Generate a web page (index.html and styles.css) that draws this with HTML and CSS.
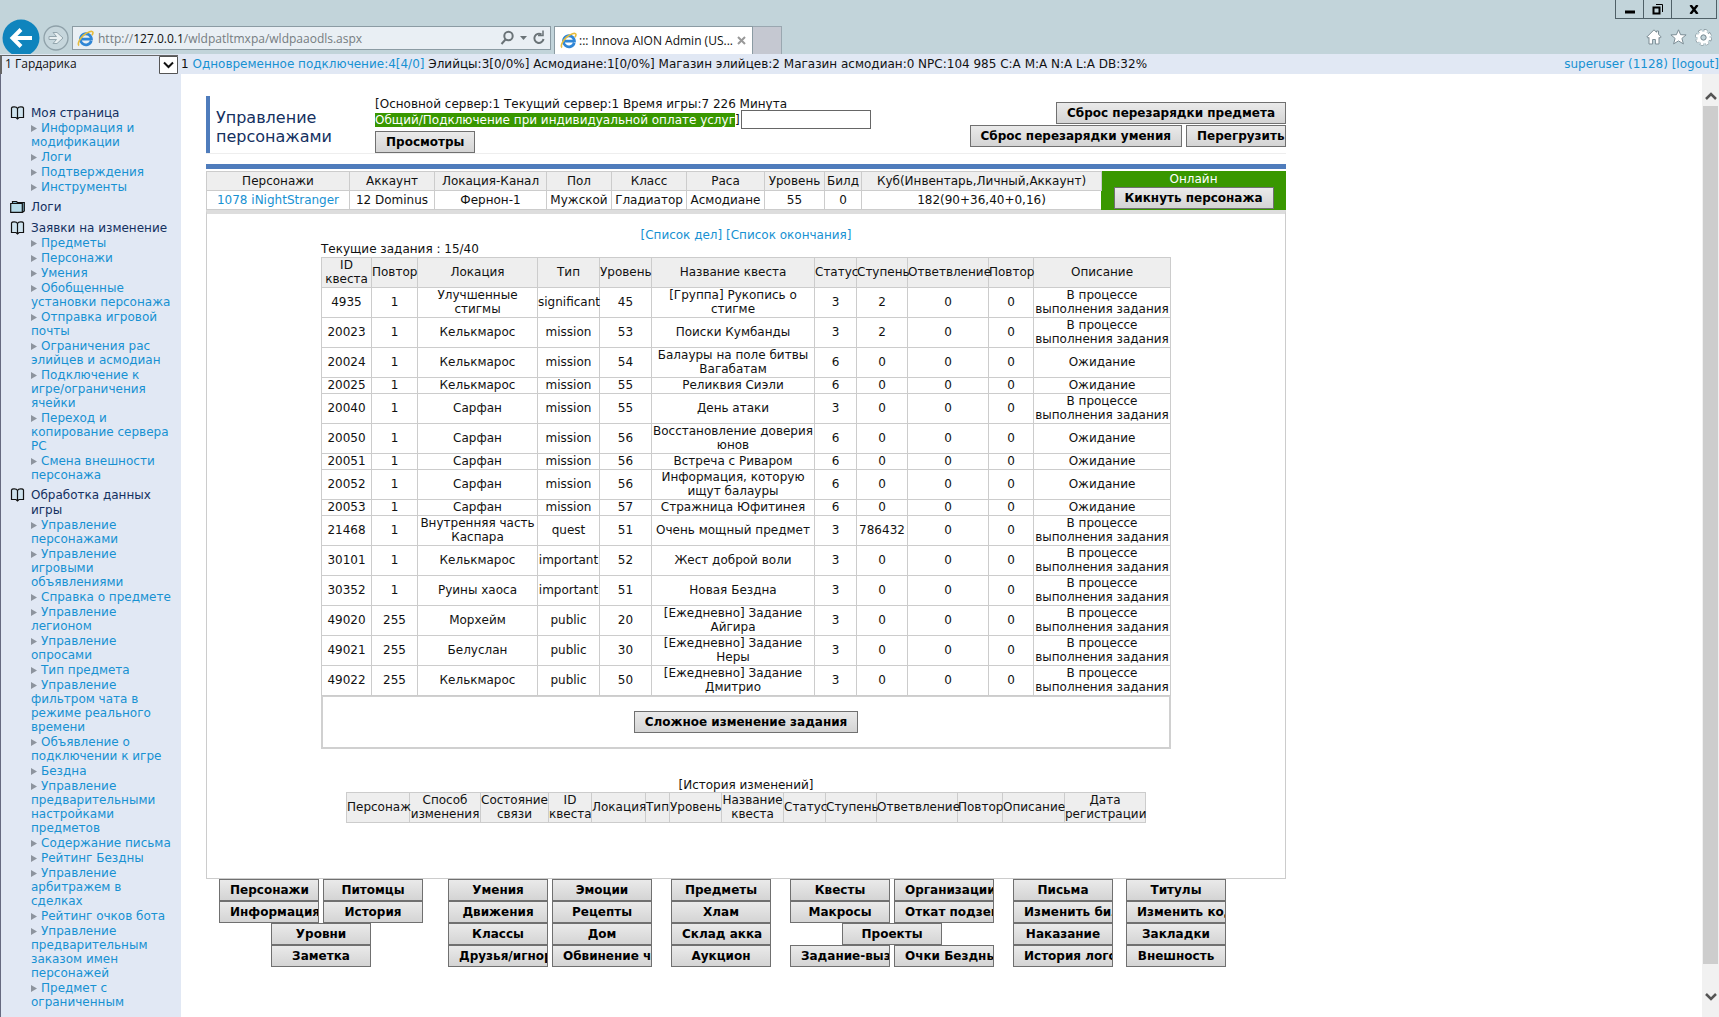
FILE: index.html
```html
<!DOCTYPE html>
<html lang="ru">
<head>
<meta charset="utf-8">
<title>::: Innova AION Admin (USER)</title>
<link rel="stylesheet" href="styles.css">
</head>
<body>
<svg class="defs" width="0" height="0" aria-hidden="true">
  <symbol id="ie" viewBox="0 0 16 16">
    <path d="M13.4 10.2A5.2 5.2 0 1 1 13.6 8.6H4.6" fill="none" stroke="#2f86d6" stroke-width="2.6"/>
    <path d="M2 14.6C.2 13.600 2 8.600 6 5S14.600.4 15 2.200c.2.900-.5 2-1 2.700" fill="none" stroke="#e6bc3c" stroke-width="1.500"/>
  </symbol>
  <symbol id="book" viewBox="0 0 15 14">
    <path d="M7.500 2.500C6.500.500 2 .500 1.500 2v9.500H6l1.500 1.500L9 11.500h4.500V2C13 .500 8.500.500 7.500 2.500z" fill="#cfe3ee" stroke="#111" stroke-width="1.200"/>
    <path d="M7.500 2.500V13" stroke="#111" stroke-width="1.200"/>
  </symbol>
  <symbol id="folder" viewBox="0 0 15 14">
    <path d="M2.500 3V1.500h4l1 1H14.300V11l-2 1.500" fill="#7fb0c4" stroke="#111" stroke-width="1.200"/>
    <path d="M.7 12.400V3.500h11.600v8.900z" fill="#b7dcea" stroke="#111" stroke-width="1.200"/>
  </symbol>
</svg>

<header class="chrome">
  <div class="nav">
    <button class="back" aria-label="Назад"><svg width="38" height="38" viewBox="0 0 38 38"><circle cx="19" cy="19" r="18.500" fill="#0f84bd"/><path d="M30 19H11M19 10.500L10.500 19l8.500 8.500" fill="none" stroke="#fff" stroke-width="4"/></svg></button>
    <button class="forward" aria-label="Вперёд"><svg width="26" height="26" viewBox="0 0 26 26"><circle cx="13" cy="13" r="12" fill="#c6d6dc" stroke="#8fa1a9" stroke-width="1.300"/><path d="M6 11.500h7.500L10 7.500h4l6 5.500-6 5.500h-4l3.500-4H6z" fill="#e9f0f2" stroke="#94a6ae"/></svg></button>
    <div class="address">
      <svg width="17" height="17"><use href="#ie"/></svg>
      <span class="url">http://<b>127.0.0.1</b>/wldpatltmxpa/wldpaaodls.aspx</span>
      <svg width="46" height="16" viewBox="0 0 46 16" fill="none" stroke="#6a7377" stroke-width="2"><circle cx="8.500" cy="6" r="4.200"/><path d="M5.500 9.500L1.500 14"/><path d="M20 6h7l-3.500 4z" fill="#6a7377" stroke="none"/><path d="M41.500 4.500A4.600 4.600 0 1 0 43.500 9"/><path d="M38 5.500h5V.5" stroke-width="1.500"/></svg>
    </div>
    <div class="tab">
      <svg width="17" height="17"><use href="#ie"/></svg>
      <span>::: Innova AION Admin (US...</span>
      <svg width="9" height="9" viewBox="0 0 9 9"><path d="M1 1l7 7M8 1L1 8" stroke="#999" stroke-width="2"/></svg>
    </div>
    <div class="newtab"></div>
  </div>
  <div class="window">
    <div class="winbuttons">
      <button aria-label="Свернуть"><svg width="10" height="10"><path d="M0 8h10" stroke="#000" stroke-width="3"/></svg></button>
      <button aria-label="Восстановить"><svg width="11" height="11" fill="none" stroke="#000"><path d="M1.500 3.500h6v6h-6z" stroke-width="2"/><path d="M4 .5h6.500V8"/></svg></button>
      <button class="close" aria-label="Закрыть"><svg width="10" height="9"><path d="M1.500 0l7 9M8.500 0l-7 9" stroke="#000" stroke-width="2.400"/></svg></button>
    </div>
    <div class="tools">
      <svg width="16" height="16" viewBox="0 0 16 16"><path d="M8 .8L.8 8l1.200 1.200L3 8.400V15h3.600v-4.500h2.800V15H13V8.400l1 .8L15.200 8 12.500 5.200V2h-2v1.300z" fill="#fff" stroke="#7c8d95"/></svg>
      <svg width="17" height="16" viewBox="0 0 17 16"><path d="M8.500.8l2.100 4.900 5.500.2-4.200 3.500 1.500 5.500-4.900-3-4.900 3 1.500-5.500L.9 5.900l5.500-.2z" fill="#fff" stroke="#7c8d95"/></svg>
      <svg width="17" height="17" viewBox="0 0 17 17"><circle cx="8.500" cy="8.500" r="6.600" fill="none" stroke="#7c8d95" stroke-width="3.600" stroke-dasharray="3.200 2"/><circle cx="8.500" cy="8.500" r="6.300" fill="none" stroke="#fff" stroke-width="3" stroke-dasharray="2.600 2.350"/><circle cx="8.500" cy="8.500" r="4.500" fill="#c2d4da" stroke="#fff" stroke-width="3"/><circle cx="8.500" cy="8.500" r="2.600" fill="none" stroke="#7c8d95"/></svg>
    </div>
  </div>
</header>

<div class="status">
  <div class="server">
    <select aria-label="Сервер"><option>1 Гардарика</option></select>
    <svg width="19" height="18" viewBox="0 0 19 18"><path d="M.5.500h18v17H.5z" fill="#fff" stroke="#555"/><path d="M5 6.500l4.500 4.500L14 6.500" fill="none" stroke="#111" stroke-width="2"/></svg>
  </div>
  <p>1 <a href="#">Одновременное подключение:4[4/0]</a> Элийцы:3[0/0%] Асмодиане:1[0/0%] Магазин элийцев:2 Магазин асмодиан:0 NPC:104 985 C:A M:A N:A L:A DB:32%</p>
  <p class="user"><a href="#">superuser (1128)</a> <a href="#">[logout]</a></p>
</div>

<div class="body">
  <nav class="sidebar">
    <section>
      <h2><svg width="15" height="14"><use href="#book"/></svg>Моя страница</h2>
      <ul>
        <li><a href="#">Информация и модификации</a></li>
        <li><a href="#">Логи</a></li>
        <li><a href="#">Подтверждения</a></li>
        <li><a href="#">Инструменты</a></li>
      </ul>
    </section>
    <section>
      <h2><svg width="15" height="14"><use href="#folder"/></svg>Логи</h2>
    </section>
    <section>
      <h2><svg width="15" height="14"><use href="#book"/></svg>Заявки на изменение</h2>
      <ul>
        <li><a href="#">Предметы</a></li>
        <li><a href="#">Персонажи</a></li>
        <li><a href="#">Умения</a></li>
        <li><a href="#">Обобщенные установки персонажа</a></li>
        <li><a href="#">Отправка игровой почты</a></li>
        <li><a href="#">Ограничения рас элийцев и асмодиан</a></li>
        <li><a href="#">Подключение к игре/ограничения ячейки</a></li>
        <li><a href="#">Переход и копирование сервера PC</a></li>
        <li><a href="#">Смена внешности персонажа</a></li>
      </ul>
    </section>
    <section>
      <h2><svg width="15" height="14"><use href="#book"/></svg>Обработка данных игры</h2>
      <ul>
        <li><a href="#">Управление персонажами</a></li>
        <li><a href="#">Управление игровыми объявлениями</a></li>
        <li><a href="#">Справка о предмете</a></li>
        <li><a href="#">Управление легионом</a></li>
        <li><a href="#">Управление опросами</a></li>
        <li><a href="#">Тип предмета</a></li>
        <li><a href="#">Управление фильтром чата в режиме реального времени</a></li>
        <li><a href="#">Объявление о подключении к игре</a></li>
        <li><a href="#">Бездна</a></li>
        <li><a href="#">Управление предварительными настройками предметов</a></li>
        <li><a href="#">Содержание письма</a></li>
        <li><a href="#">Рейтинг Бездны</a></li>
        <li><a href="#">Управление арбитражем в сделках</a></li>
        <li><a href="#">Рейтинг очков бота</a></li>
        <li><a href="#">Управление предварительным заказом имен персонажей</a></li>
        <li><a href="#">Предмет с ограниченным</a></li>
      </ul>
    </section>
  </nav>

  <main>
    <div class="page">
      <div class="head">
        <h1>Управление персонажами</h1>
        <div class="session">
          <p>[Основной сервер:1 Текущий сервер:1 Время игры:7 226 Минута</p>
          <p class="mode"><mark>Общий/Подключение при индивидуальной оплате услуг</mark>] <input type="text" aria-label="Комментарий"></p>
          <button class="btn">Просмотры</button>
        </div>
        <div class="actions">
          <button class="btn">Сброс перезарядки предмета</button>
          <div class="pair"><button class="btn">Сброс перезарядки умения</button><button class="btn fixed">Перегрузить</button></div>
        </div>
      </div>

      <div class="summary">
        <table class="grid">
          <colgroup><col class="w143"><col class="w85"><col class="w112"><col class="w65"><col class="w75"><col class="w78"><col class="w60"><col class="w37"><col class="w240"><col></colgroup>
          <tr><th>Персонажи</th><th>Аккаунт</th><th>Локация-Канал</th><th>Пол</th><th>Класс</th><th>Раса</th><th>Уровень</th><th>Билд</th><th>Куб(Инвентарь,Личный,Аккаунт)</th><td class="online" rowspan="2">Онлайн<button class="btn kick">Кикнуть персонажа</button></td></tr>
          <tr><td><a href="#">1078 iNightStranger</a></td><td>12 Dominus</td><td>Фернон-1</td><td>Мужской</td><td>Гладиатор</td><td>Асмодиане</td><td>55</td><td>0</td><td>182(90+36,40+0,16)</td></tr>
        </table>
      </div>

      <div class="panel">
        <p class="links"><a href="#">[Список дел]</a> <a href="#">[Список окончания]</a></p>
        <div class="quests">
          <p>Текущие задания : 15/40</p>
          <table class="grid">
            <colgroup><col class="w50"><col class="w46"><col class="w120"><col class="w62"><col class="w52"><col class="w163"><col class="w42"><col class="w51"><col class="w81"><col class="w45"><col></colgroup>
            <tr><th>ID квеста</th><th>Повтор</th><th>Локация</th><th>Тип</th><th>Уровень</th><th>Название квеста</th><th>Статус</th><th>Ступень</th><th>Ответвление</th><th>Повтор</th><th>Описание</th></tr>
            <tr><td>4935</td><td>1</td><td>Улучшенные стигмы</td><td>significant</td><td>45</td><td>[Группа] Рукопись о стигме</td><td>3</td><td>2</td><td>0</td><td>0</td><td>В процессе<br>выполнения задания</td></tr>
            <tr><td>20023</td><td>1</td><td>Келькмарос</td><td>mission</td><td>53</td><td>Поиски Кумбанды</td><td>3</td><td>2</td><td>0</td><td>0</td><td>В процессе<br>выполнения задания</td></tr>
            <tr><td>20024</td><td>1</td><td>Келькмарос</td><td>mission</td><td>54</td><td>Балауры на поле битвы Вагабатам</td><td>6</td><td>0</td><td>0</td><td>0</td><td>Ожидание</td></tr>
            <tr><td>20025</td><td>1</td><td>Келькмарос</td><td>mission</td><td>55</td><td>Реликвия Сиэли</td><td>6</td><td>0</td><td>0</td><td>0</td><td>Ожидание</td></tr>
            <tr><td>20040</td><td>1</td><td>Сарфан</td><td>mission</td><td>55</td><td>День атаки</td><td>3</td><td>0</td><td>0</td><td>0</td><td>В процессе<br>выполнения задания</td></tr>
            <tr><td>20050</td><td>1</td><td>Сарфан</td><td>mission</td><td>56</td><td>Восстановление доверия юнов</td><td>6</td><td>0</td><td>0</td><td>0</td><td>Ожидание</td></tr>
            <tr><td>20051</td><td>1</td><td>Сарфан</td><td>mission</td><td>56</td><td>Встреча с Риваром</td><td>6</td><td>0</td><td>0</td><td>0</td><td>Ожидание</td></tr>
            <tr><td>20052</td><td>1</td><td>Сарфан</td><td>mission</td><td>56</td><td>Информация, которую ищут балауры</td><td>6</td><td>0</td><td>0</td><td>0</td><td>Ожидание</td></tr>
            <tr><td>20053</td><td>1</td><td>Сарфан</td><td>mission</td><td>57</td><td>Стражница Юфитинея</td><td>6</td><td>0</td><td>0</td><td>0</td><td>Ожидание</td></tr>
            <tr><td>21468</td><td>1</td><td>Внутренняя часть Каспара</td><td>quest</td><td>51</td><td>Очень мощный предмет</td><td>3</td><td>786432</td><td>0</td><td>0</td><td>В процессе<br>выполнения задания</td></tr>
            <tr><td>30101</td><td>1</td><td>Келькмарос</td><td>important</td><td>52</td><td>Жест доброй воли</td><td>3</td><td>0</td><td>0</td><td>0</td><td>В процессе<br>выполнения задания</td></tr>
            <tr><td>30352</td><td>1</td><td>Руины хаоса</td><td>important</td><td>51</td><td>Новая Бездна</td><td>3</td><td>0</td><td>0</td><td>0</td><td>В процессе<br>выполнения задания</td></tr>
            <tr><td>49020</td><td>255</td><td>Морхейм</td><td>public</td><td>20</td><td>[Ежедневно] Задание Айгира</td><td>3</td><td>0</td><td>0</td><td>0</td><td>В процессе<br>выполнения задания</td></tr>
            <tr><td>49021</td><td>255</td><td>Белуслан</td><td>public</td><td>30</td><td>[Ежедневно] Задание Неры</td><td>3</td><td>0</td><td>0</td><td>0</td><td>В процессе<br>выполнения задания</td></tr>
            <tr><td>49022</td><td>255</td><td>Келькмарос</td><td>public</td><td>50</td><td>[Ежедневно] Задание Дмитрио</td><td>3</td><td>0</td><td>0</td><td>0</td><td>В процессе<br>выполнения задания</td></tr>
          </table>
          <div class="edit"><button class="btn">Сложное изменение задания</button></div>
        </div>
        <div class="history">
          <p>[История изменений]</p>
          <table class="grid">
            <colgroup><col class="w63"><col class="w71"><col class="w68"><col class="w43"><col class="w54"><col class="w24"><col class="w52"><col class="w62"><col class="w42"><col class="w51"><col class="w81"><col class="w45"><col class="w62"><col></colgroup>
            <tr><th>Персонаж</th><th>Способ изменения</th><th>Состояние связи</th><th>ID квеста</th><th>Локация</th><th>Тип</th><th>Уровень</th><th>Название квеста</th><th>Статус</th><th>Ступень</th><th>Ответвление</th><th>Повтор</th><th>Описание</th><th>Дата регистрации</th></tr>
          </table>
        </div>
      </div>

      <div class="menu">
        <div class="group first">
          <div><button class="btn fixed">Персонажи</button><button class="btn fixed">Питомцы</button></div>
          <div><button class="btn fixed">Информация</button><button class="btn fixed">История</button></div>
          <div><button class="btn fixed">Уровни</button></div>
          <div><button class="btn fixed">Заметка</button></div>
        </div>
        <div class="group">
          <div><button class="btn fixed">Умения</button><button class="btn fixed">Эмоции</button></div>
          <div><button class="btn fixed">Движения</button><button class="btn fixed">Рецепты</button></div>
          <div><button class="btn fixed">Классы</button><button class="btn fixed">Дом</button></div>
          <div><button class="btn fixed">Друзья/игнор</button><button class="btn fixed">Обвинение чата</button></div>
        </div>
        <div class="group">
          <div><button class="btn fixed">Предметы</button></div>
          <div><button class="btn fixed">Хлам</button></div>
          <div><button class="btn fixed">Склад акка</button></div>
          <div><button class="btn fixed">Аукцион</button></div>
        </div>
        <div class="group">
          <div><button class="btn fixed">Квесты</button><button class="btn fixed">Организации</button></div>
          <div><button class="btn fixed">Макросы</button><button class="btn fixed">Откат подземелий</button></div>
          <div><button class="btn fixed">Проекты</button></div>
          <div><button class="btn fixed">Задание-вызов</button><button class="btn fixed">Очки Бездны</button></div>
        </div>
        <div class="group near">
          <div><button class="btn fixed">Письма</button></div>
          <div><button class="btn fixed">Изменить билд</button></div>
          <div><button class="btn fixed">Наказание</button></div>
          <div><button class="btn fixed">История логов</button></div>
        </div>
        <div class="group">
          <div><button class="btn fixed">Титулы</button></div>
          <div><button class="btn fixed">Изменить код</button></div>
          <div><button class="btn fixed">Закладки</button></div>
          <div><button class="btn fixed">Внешность</button></div>
        </div>
      </div>
    </div>
  </main>

  <div class="scroll">
    <svg width="12" height="10" viewBox="0 0 12 10"><path d="M1 8l5-5 5 5" fill="none" stroke="#555" stroke-width="2.500"/></svg>
    <div class="thumb"></div>
    <svg width="12" height="10" viewBox="0 0 12 10"><path d="M1 2l5 5 5-5" fill="none" stroke="#555" stroke-width="2.500"/></svg>
  </div>
</div>
</body>
</html>
```
FILE: styles.css
```css
* { box-sizing: border-box; }
body {
  margin: 0;
  height: 100vh;
  display: flex;
  flex-direction: column;
  overflow: hidden;
  font: 12px/14px Verdana, "DejaVu Sans", sans-serif;
  color: #111;
  background: #fff;
}
p, h1, h2, ul { margin: 0; padding: 0; font-weight: normal; }
a { color: #1791d2; text-decoration: none; }
button { font: inherit; }
svg { flex: none; display: block; }
.defs { position: absolute; }

/* browser frame */
.chrome {
  display: flex;
  justify-content: space-between;
  flex: none;
  height: 54px;
  background: #c2d4da;
  overflow: hidden;
  font-family: "Open Sans", "Noto Sans", sans-serif;
}
.nav { display: flex; align-items: flex-start; padding-left: 2px; }
.back, .forward { padding: 0; border: 0; background: none; }
.back { margin-top: 19px; }
.forward { margin: 25px 3px 0; }
.address {
  display: flex;
  align-items: center;
  width: 479px;
  height: 24px;
  margin-top: 26px;
  padding: 0 4px;
  border: 1px solid #8b9ba3;
  background: #e9eff4;
}
.url { flex: 1; padding: 2px 0 0 4px; color: #757c80; }
.url b { font-weight: normal; color: #111; }
.tab {
  display: flex;
  align-items: center;
  width: 199px;
  height: 28px;
  margin: 26px 0 0 3px;
  padding: 0 6px 0 5px;
  border: 1px solid #8b9ba3;
  border-bottom: 0;
  background: #fff;
}
.tab span { flex: 1; padding-left: 2px; white-space: nowrap; }
.newtab { width: 29px; height: 28px; margin-top: 26px; border: 1px solid #9aa7b0; border-width: 1px 1px 0 0; background: #c5c8d1; }
.window { display: flex; flex-direction: column; align-items: flex-end; padding-right: 2px; }
.winbuttons { display: flex; height: 19px; border: 1px solid #4f6067; border-top: 0; }
.winbuttons button { display: grid; place-items: center; width: 28px; padding: 0; border: 0; border-right: 1px solid #4f6067; background: none; }
.winbuttons .close { width: 44px; border: 0; }
.tools { display: flex; gap: 8px; margin: 10px 5px 0 0; }

/* status strip */
.status { display: flex; align-items: center; flex: none; height: 20px; background: #e1e8f4; white-space: nowrap; }
.server { display: flex; width: 178px; height: 19px; margin-right: 3px; border: solid #666; border-width: 1px 0 0 2px; }
.server select { flex: 1; appearance: none; border: 0; padding: 0 3px 2px; background: #e1e8f4; color: #111; font: 12px/16px "Open Sans", "Noto Sans", sans-serif; }
.user { margin-left: auto; }

.body { display: flex; flex: 1; min-height: 0; }

/* sidebar */
.sidebar { flex: none; width: 181px; padding: 32px 9px 0 9px; border-left: 1px solid #666a80; background: #e1e8f4; overflow: hidden; }
.sidebar section { margin-bottom: 6px; }
.sidebar h2 { display: flex; gap: 6px; font-size: 12px; line-height: 15px; color: #14305f; }
.sidebar ul { list-style: none; padding-left: 21px; }
.sidebar li { margin-bottom: 1px; }
.sidebar li::before { content: ""; display: inline-block; width: 6px; height: 7px; margin-right: 4px; background: #8d949e; clip-path: polygon(0 0, 100% 50%, 0 100%); }

/* page */
main { flex: 1; min-width: 0; padding: 22px 25px 0; overflow: hidden; }
.page { max-width: 1080px; }
.head { display: flex; height: 58px; border-bottom: 1px solid #eee; margin-bottom: 10px; }
h1 { width: 169px; padding: 12px 40px 0 6px; border-left: 4px solid #4f7cbc; font-size: 16px; line-height: 19px; color: #14305f; }
.session { display: flex; flex-direction: column; align-items: flex-start; white-space: nowrap; }
.session p:first-child { padding-top: 1px; }
.session > .btn { margin-top: 3px; }
.mode { display: flex; align-items: center; height: 17px; }
mark { background: #399700; color: #fff; }
input { width: 130px; height: 19px; margin-left: 1px; border: 1px solid #666; background: #fff; }
.actions { display: flex; flex-direction: column; align-items: flex-end; gap: 1px; margin-left: auto; padding-top: 6px; }
.pair { display: flex; gap: 4px; }
.btn {
  display: flex;
  justify-content: safe center;
  align-items: center;
  height: 22px;
  padding: 0 10px;
  border: 1px solid #707070;
  background: linear-gradient(#eaeaea, #d4d4d4);
  color: #000;
  font-weight: bold;
  white-space: nowrap;
  overflow: hidden;
}
.fixed { width: 100px; flex: none; }

.grid { width: 100%; border-collapse: collapse; table-layout: fixed; }
.grid th, .grid td { height: 16px; padding: 0 0 1px; border: 1px solid #ccc; text-align: center; font-weight: normal; }
.grid th { background: #eee; }

.summary { border-top: 5px solid #4f7cbc; padding-top: 2px; background: #fff; }
.summary .grid th, .summary .grid td { height: 19px; padding: 0; }
.summary .grid .online { border-color: #399700; background: #399700; color: #fff; vertical-align: top; }
.kick { margin: 1px auto 0; }

.panel { border: 1px solid #ccc; border-top: 4px solid #ddd; padding: 14px 0 55px; }
.links { text-align: center; }
.quests { max-width: 850px; margin: 0 auto; }
.quests p { padding-bottom: 1px; }
.edit { display: flex; justify-content: center; height: 53px; padding-top: 14px; border: 2px solid #d0d0d0; border-top: 1px solid #d0d0d0; }
.history { max-width: 800px; margin: 29px auto 0; }
.history p { text-align: center; }

.menu { display: flex; padding-left: 13px; }
.group { margin-right: 19px; }
.group.first { margin-right: 25px; }
.group.near { margin-right: 13px; }
.group div { display: flex; justify-content: center; gap: 4px; }

.w24 { width: 24px; }
.w37 { width: 37px; }
.w42 { width: 42px; }
.w43 { width: 43px; }
.w45 { width: 45px; }
.w46 { width: 46px; }
.w50 { width: 50px; }
.w51 { width: 51px; }
.w52 { width: 52px; }
.w54 { width: 54px; }
.w60 { width: 60px; }
.w62 { width: 62px; }
.w63 { width: 63px; }
.w65 { width: 65px; }
.w68 { width: 68px; }
.w71 { width: 71px; }
.w75 { width: 75px; }
.w78 { width: 78px; }
.w81 { width: 81px; }
.w85 { width: 85px; }
.w112 { width: 112px; }
.w120 { width: 120px; }
.w143 { width: 143px; }
.w163 { width: 163px; }
.w240 { width: 240px; }

/* scrollbar */
.scroll { flex: none; display: flex; flex-direction: column; align-items: center; width: 17px; padding: 17px 0 15px; background: #f1f1f1; }
.thumb { width: 15px; flex: 1; margin: 5px 0 28px; background: #cdcdcd; }
```
